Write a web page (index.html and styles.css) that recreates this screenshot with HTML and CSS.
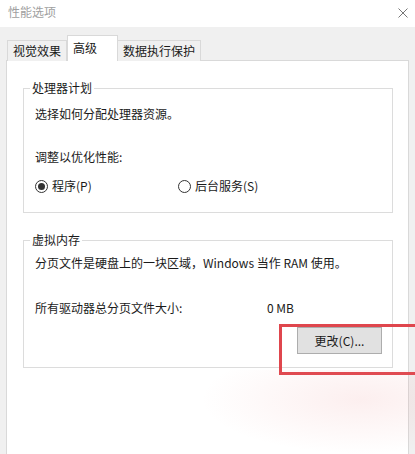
FILE: index.html
```html
<!DOCTYPE html>
<html lang="zh-CN">
<head>
  <meta charset="UTF-8" />
  <meta name="viewport" content="width=device-width, initial-scale=1.0" />
  <title>性能选项</title>
  <link rel="stylesheet" href="styles.css">
</head>
<body>
  <div class="titlebar">
    <span class="title">性能选项</span>
    <svg class="close" width="10" height="10" viewBox="0 0 10 10">
      <path d="M0.5 0.5 L9.5 9.5 M9.5 0.5 L0.5 9.5" stroke="#777" stroke-width="1" fill="none" />
    </svg>
  </div>

  <div class="tabs">
    <div class="tab">视觉效果</div>
    <div class="tab active">高级</div>
    <div class="tab">数据执行保护</div>
  </div>

  <div class="panel">
    <fieldset class="group">
      <legend>处理器计划</legend>
      <p class="line first">选择如何分配处理器资源。</p>
      <p class="line adjust">调整以优化性能:</p>
      <div class="radio-row">
        <label class="option"><span class="radio checked"></span>程序(P)</label>
        <label class="option"><span class="radio"></span>后台服务(S)</label>
      </div>
    </fieldset>

    <fieldset class="group memory">
      <legend>虚拟内存</legend>
      <p class="line desc">分页文件是硬盘上的一块区域，Windows 当作 RAM 使用。</p>
      <div class="size-row">
        <span class="size-label">所有驱动器总分页文件大小:</span>
        <span>0 MB</span>
      </div>
      <div class="button-row">
        <button class="btn">更改(C)...</button>
      </div>
    </fieldset>
  </div>

  <!-- annotation overlay from the screenshot -->
  <div class="highlight-box"></div>
  <div class="glow"></div>
</body>
</html>
```

FILE: styles.css
```css
body {
  margin: 0;
  font-family: "Noto Sans CJK SC", "Noto Sans", sans-serif;
  font-size: 12px;
  color: #1a1a1a;
  background-color: #f0f0f0;
  height: 454px;
  overflow: hidden;
  position: relative;
}
.titlebar {
  height: 27px;
  background: #fff;
  display: flex;
  align-items: center;
  justify-content: space-between;
  padding: 0 7px 3px 8px;
  box-sizing: border-box;
}
.title {
  color: #a0a0a0;
  line-height: 16px;
}
.close {
  margin-top: 2px;
}
.tabs {
  display: flex;
  align-items: flex-end;
  height: 34px;
  margin-bottom: -1px;
  padding-left: 7px;
  box-sizing: border-box;
}
.tab {
  height: 21px;
  line-height: 20px;
  padding: 0 5px;
  border: 1px solid #d9d9d9;
  border-bottom: none;
  background: #f0f0f0;
  box-sizing: border-box;
}
.tab + .tab {
  border-left: none;
}
.tab.active {
  height: 26px;
  line-height: 24px;
  padding: 0 20px 0 5px;
  background: #fff;
  border-left: 1px solid #d9d9d9;
  position: relative;
  z-index: 1;
}
.tab.active + .tab {
  border-left: none;
}
.panel {
  margin: 0 6px 0 6px;
  height: 394px;
  background: #fff;
  border: 1px solid #d9d9d9;
  border-bottom: none;
  padding: 19px 15px 0 16px;
  box-sizing: border-box;
}
.group {
  margin: 0;
  padding: 0 10px 18px 11px;
  border: 1px solid #dcdcdc;
}
.group legend {
  line-height: 16px;
  padding: 0 2px;
  margin-left: -5px;
}
.line {
  margin: 0;
  line-height: 16px;
}
.line.first {
  margin-top: 10px;
}
.line.adjust {
  margin-top: 27px;
}
.radio-row {
  display: flex;
  margin-top: 13px;
  line-height: 16px;
}
.option {
  display: flex;
  align-items: center;
  gap: 4px;
}
.option:first-child {
  width: 143px;
}
.radio {
  width: 13px;
  height: 13px;
  border: 1px solid #333;
  border-radius: 50%;
  box-sizing: border-box;
  display: flex;
  align-items: center;
  justify-content: center;
}
.radio.checked::after {
  content: "";
  width: 7px;
  height: 7px;
  border-radius: 50%;
  background: #333;
}
.memory {
  margin-top: 19px;
  padding-bottom: 13px;
}
.line.desc {
  margin-top: 7px;
}
.size-row {
  display: flex;
  margin-top: 29px;
  line-height: 16px;
}
.size-label {
  width: 232px;
}
.button-row {
  display: flex;
  justify-content: flex-end;
  margin-top: 11px;
}
.btn {
  width: 85px;
  height: 27px;
  font-family: inherit;
  font-size: 12px;
  color: #1a1a1a;
  background: #e1e1e1;
  border: 1px solid #adadad;
  padding: 0;
}
.highlight-box {
  position: absolute;
  left: 279px;
  top: 324px;
  width: 145px;
  height: 51px;
  border: 3px solid #df464d;
  box-sizing: border-box;
}
.glow {
  position: absolute;
  left: 200px;
  top: 370px;
  width: 215px;
  height: 84px;
  background: radial-gradient(ellipse at 75% 35%, rgba(236, 140, 140, 0.14), rgba(255, 255, 255, 0) 70%);
}
```
